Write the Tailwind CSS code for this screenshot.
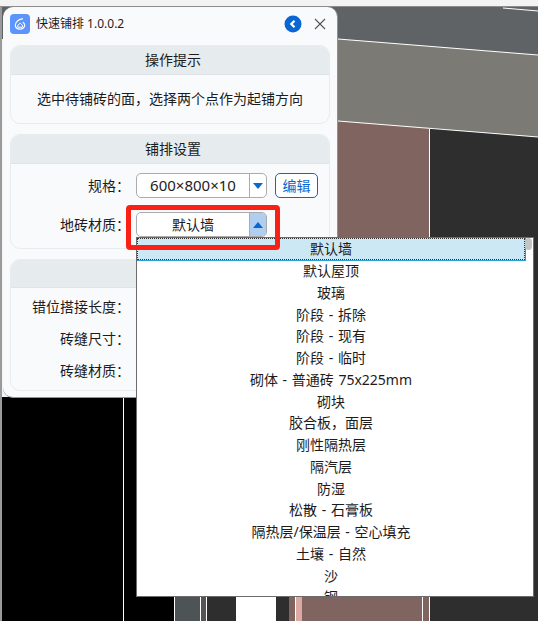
<!DOCTYPE html>
<html lang="zh">
<head>
  <meta charset="UTF-8" />
  <title>快速铺排</title>
  <script src="https://cdn.jsdelivr.net/npm/@tailwindcss/browser@4"></script>
</head>
<body class="relative w-[538px] h-[621px] overflow-hidden bg-[#f3f3f3] font-['Noto_Sans','Noto_Sans_CJK_SC',sans-serif] text-[14px] text-[#1c1c1c]">

  <!-- 背景模型视图 -->
  <svg class="absolute left-0 top-0" width="538" height="621" viewBox="0 0 538 621" shape-rendering="crispEdges">
    <rect x="0" y="6" width="538" height="1" fill="#8c8c8c"/>
    <rect x="0" y="7" width="2" height="614" fill="#9a9a9a"/>
    <rect x="2" y="7" width="536" height="32" fill="#5f6365"/>
    <polygon points="338,39 538,55 538,7 338,7" fill="#5f6365"/>
    <polygon points="338,39 538,55 538,137 338,121" fill="#7b7a75"/>
    <polygon points="338,121 429,128 429,597 338,597" fill="#7f6460"/>
    <polygon points="429,128 538,137 538,621 429,621" fill="#2e2e2e"/>
    <rect x="2" y="397" width="134" height="224" fill="#000"/>
    <rect x="136" y="597" width="38" height="24" fill="#000"/>
    <rect x="175" y="597" width="25" height="24" fill="#4e5356"/>
    <rect x="201" y="597" width="5" height="24" fill="#555"/>
    <rect x="207" y="597" width="29" height="24" fill="#2e2e2e"/>
    <rect x="236" y="597" width="40" height="24" fill="#fff"/>
    <rect x="276" y="597" width="13" height="24" fill="#2e2e2e"/>
    <rect x="289" y="597" width="6" height="24" fill="#7f6460"/>
    <rect x="296" y="597" width="6" height="24" fill="#dcaaa3"/>
    <rect x="302" y="597" width="127" height="24" fill="#7f6460"/>
    <g stroke="#fff" stroke-width="1" fill="none" shape-rendering="auto">
      <path d="M503 8 L538 11"/>
      <path d="M338 39 L538 55"/>
      <path d="M338 121 L538 137"/>
    </g>
    <g fill="#fff">
      <rect x="429" y="129" width="1" height="108"/>
      <rect x="123" y="397" width="1" height="224"/>
      <rect x="174" y="597" width="1" height="24"/>
      <rect x="200" y="597" width="1" height="24"/>
      <rect x="206" y="597" width="1" height="24"/>
      <rect x="295" y="597" width="1" height="24"/>
      <rect x="422" y="597" width="1" height="24"/>
      <rect x="429" y="597" width="1" height="24"/>
    </g>
  </svg>

  <!-- 插件窗口 -->
  <div class="absolute left-[3px] top-[7px] w-[335px] h-[391px] flex flex-col bg-[#f9fafc] rounded-[10px] border-b border-r border-[#8a9597] px-[7px]">
    <div class="h-[34px] mb-[4px] flex items-center shrink-0">
      <svg class="shrink-0" width="20" height="20" viewBox="0 0 20 20">
        <rect width="20" height="20" rx="4" fill="#5b94fb"/>
        <path d="M12.5 4.8 C9.5 5 5.3 7.5 5.3 11 C5.3 13.6 7.4 15.2 10 15.2 C12.6 15.2 14.7 13.5 14.7 11.2 C14.7 10 14.1 9 13.2 8.4" fill="none" stroke="#fff" stroke-width="1.2" stroke-linecap="round"/>
        <path d="M7.8 11.3 L10.2 9.2 L12.5 11.3 V13.2 H7.8 Z" fill="none" stroke="#fff" stroke-width="1"/>
      </svg>
      <span class="ml-[6px] text-[12px]">快速铺排 1.0.0.2</span>
      <svg class="ml-auto" width="18" height="18" viewBox="0 0 18 18">
        <circle cx="9" cy="9" r="8.5" fill="#0a66d0"/>
        <path d="M10.5 5.8 L7.3 9 L10.5 12.2" fill="none" stroke="#fff" stroke-width="2.2"/>
      </svg>
      <svg class="ml-[12px] mr-[4px]" width="12" height="12" viewBox="0 0 12 12">
        <path d="M1 1 L11 11 M11 1 L1 11" stroke="#555" stroke-width="1.1" fill="none"/>
      </svg>
    </div>

    <section class="h-[79px] shrink-0 rounded-[10px] border border-[#e8ecee] overflow-hidden">
      <h2 class="h-[29px] pl-[6px] pb-[2px] flex items-center justify-center bg-[#e6ebed] border-b border-[#dfe4e6]">操作提示</h2>
      <p class="h-[47px] flex items-center justify-center">选中待铺砖的面，选择两个点作为起铺方向</p>
    </section>

    <section class="mt-[10px] h-[115px] shrink-0 rounded-[10px] border border-[#e8ecee] overflow-hidden">
      <h2 class="h-[29px] pl-[6px] pb-[2px] flex items-center justify-center bg-[#e6ebed] border-b border-[#dfe4e6]">铺排设置</h2>
      <div class="mt-[9px] h-[25px] flex items-center">
        <label class="w-[119px] text-right">规格：</label>
        <div class="ml-[6px] w-[131px] h-[25px] flex bg-white border border-[#ababab] rounded-[5px] overflow-hidden">
          <span class="flex-1 flex items-center justify-center text-[15px]">600×800×10</span>
          <span class="w-[17px] flex items-center justify-center border-l border-[#ababab]">
            <svg width="10" height="6" viewBox="0 0 10 6"><path d="M0 0 H10 L5 6 Z" fill="#0a66d0"/></svg>
          </span>
        </div>
        <button class="ml-[8px] w-[43px] h-[25px] bg-white text-[#0a66d0] border border-[#0a66d0] rounded-[5px]">编辑</button>
      </div>
      <div class="mt-[14px] h-[25px] flex items-center">
        <label class="w-[119px] text-right">地砖材质：</label>
        <div class="ml-[6px] w-[131px] h-[25px] flex bg-white border border-[#ababab] rounded-[5px] overflow-hidden">
          <span class="flex-1 flex items-center justify-center">默认墙</span>
          <span class="w-[17px] flex items-center justify-center border-l border-[#ababab] bg-[#b0cff0]">
            <svg width="10" height="6" viewBox="0 0 10 6"><path d="M0 6 H10 L5 0 Z" fill="#0a66d0"/></svg>
          </span>
        </div>
      </div>
    </section>

    <section class="mt-[10px] h-[132px] shrink-0 rounded-[10px] border border-[#e8ecee] overflow-hidden">
      <h2 class="h-[28px] bg-[#e6ebed] border-b border-[#dfe4e6]"></h2>
      <div class="mt-[7px] flex flex-col gap-[10px]">
        <label class="h-[22px] w-[119px] flex items-center justify-end">错位搭接长度：</label>
        <label class="h-[22px] w-[119px] flex items-center justify-end">砖缝尺寸：</label>
        <label class="h-[22px] w-[119px] flex items-center justify-end">砖缝材质：</label>
      </div>
    </section>
  </div>

  <!-- 下拉列表 -->
  <div class="absolute left-[136px] top-[237px] w-[398px] h-[360px] bg-white border border-[#6b6b6b] overflow-hidden">
    <ul class="w-[388px] text-center leading-[21.75px] [word-spacing:1px]">
      <li class="h-[22px] bg-[#cce8f5] outline outline-1 outline-[#2a9fd6] border border-dotted border-[#333] leading-[20px]">默认墙</li>
      <li class="h-[21.75px]">默认屋顶</li>
      <li class="h-[21.75px]">玻璃</li>
      <li class="h-[21.75px]">阶段 - 拆除</li>
      <li class="h-[21.75px]">阶段 - 现有</li>
      <li class="h-[21.75px]">阶段 - 临时</li>
      <li class="h-[21.75px]">砌体 - 普通砖 75x225mm</li>
      <li class="h-[21.75px]">砌块</li>
      <li class="h-[21.75px]">胶合板，面层</li>
      <li class="h-[21.75px]">刚性隔热层</li>
      <li class="h-[21.75px]">隔汽层</li>
      <li class="h-[21.75px]">防湿</li>
      <li class="h-[21.75px]">松散 - 石膏板</li>
      <li class="h-[21.75px]">隔热层/保温层 - 空心填充</li>
      <li class="h-[21.75px]">土壤 - 自然</li>
      <li class="h-[21.75px]">沙</li>
      <li class="h-[21.75px]">钢</li>
    </ul>
    <div class="absolute right-[1px] top-0 w-[7px] h-[12px] rounded-full bg-[#c4c4c4]"></div>
  </div>

  <!-- 红色标注框 -->
  <div class="absolute left-[126px] top-[205px] w-[154px] h-[45px] border-[5px] border-[#fb2015] rounded-[4px]"></div>
</body>
</html>
